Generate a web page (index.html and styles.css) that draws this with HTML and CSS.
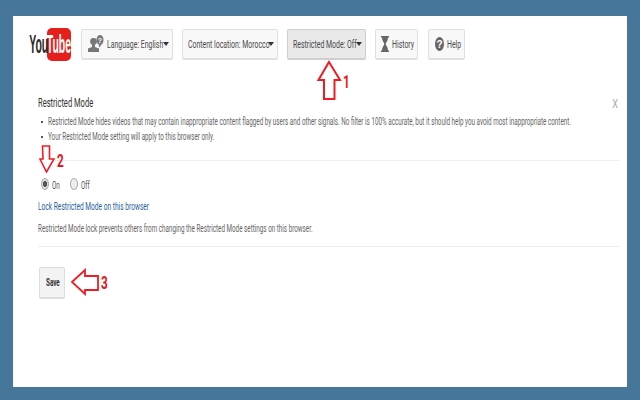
FILE: index.html
```html
<!DOCTYPE html>
<html lang="en">
<head>
<meta charset="utf-8">
<title>Restricted Mode</title>
<link rel="stylesheet" href="styles.css">
</head>
<body>
<main class="panel">
  <header class="topbar">
    <div class="logo"><span class="you"><span class="you-text">You</span></span><span class="tube"><span class="tube-text">Tube</span></span></div>
    <nav class="menu">
      <button class="btn btn-lang">
        <svg class="ic" width="16" height="18" viewBox="0 0 16 18"><circle cx="5.500" cy="6.500" r="3.400" fill="#777"/><path d="M4 9.500h3V12l4 1.500V17H0v-3.500L4 12z" fill="#777"/><ellipse cx="12" cy="5" rx="3.500" ry="5" fill="#777"/><path d="M10.500 9.500h3l-2 3z" fill="#777"/><text x="12" y="8" class="ic-q">?</text></svg>
        <span class="sq label-lang">Language: English</span><i class="caret"></i>
      </button>
      <button class="btn btn-loc"><span class="sq label-loc">Content location: Morocco</span><i class="caret"></i></button>
      <button class="btn btn-mode"><span class="sq label-mode">Restricted Mode: Off</span><i class="caret"></i></button>
      <button class="btn btn-hist">
        <svg class="ic" width="8" height="16" viewBox="0 0 8 16"><path d="M0 0h8v1.500H7C7 5 5 6.500 4.700 8 5 9.500 7 11 7 14.500h1V16H0v-1.500h1C1 11 3 9.500 3.300 8 3 6.500 1 5 1 1.500H0z" fill="#666"/></svg>
        <span class="sq label-hist">History</span>
      </button>
      <button class="btn btn-help">
        <svg class="ic" width="9" height="14" viewBox="0 0 9 14"><ellipse cx="4.500" cy="7" rx="4.500" ry="7" fill="#666"/><text x="4.500" y="10.500" class="ic-help">?</text></svg>
        <span class="sq label-help">Help</span>
      </button>
    </nav>
  </header>

  <section class="content">
    <div class="title-row">
      <h1 class="title sq">Restricted Mode</h1>
      <span class="close">X</span>
    </div>
    <ul class="notes">
      <li><span class="sq">Restricted Mode hides videos that may contain inappropriate content flagged by users and other signals. No filter is 100% accurate, but it should help you avoid most inappropriate content.</span></li>
      <li><span class="sq">Your Restricted Mode setting will apply to this browser only.</span></li>
    </ul>
    <hr class="rule rule-a">
    <div class="radios">
      <span class="radio radio-on"></span><span class="radio-label sq">On</span>
      <span class="radio"></span><span class="radio-label sq">Off</span>
    </div>
    <a class="lock sq">Lock Restricted Mode on this browser</a>
    <p class="desc"><span class="sq">Restricted Mode lock prevents others from changing the Restricted Mode settings on this browser.</span></p>
    <hr class="rule rule-b">
    <button class="save"><span class="sq">Save</span></button>
  </section>

  <svg class="arrow arrow-1" width="26" height="42" viewBox="0 0 26 42"><path d="M12 2 23 20H17.500V39H7V20H1.500z" fill="#fff" stroke="#ee1c25" stroke-width="2"/></svg>
  <span class="num num-1">1</span>
  <svg class="arrow arrow-2" width="16" height="28" viewBox="0 0 16 28"><path d="M3.500 1h7v13H15L7.500 27 1 14h3z" fill="#fff" stroke="#ee1c25" stroke-width="1.600"/></svg>
  <span class="num num-2">2</span>
  <svg class="arrow arrow-3" width="28" height="28" viewBox="0 0 28 28"><path d="M1 14 14 2v6h13v14H14v4z" fill="#fff" stroke="#ee1c25" stroke-width="1.800"/></svg>
  <span class="num num-3">3</span>
</main>
</body>
</html>
```
FILE: styles.css
```css
* { box-sizing: border-box; }
html, body { margin: 0; height: 400px; overflow: hidden; }
body {
  background: #47769b;
  padding: 16px 13px 13px;
  font-family: "Roboto", "Liberation Sans", sans-serif;
  color: #555;
}
.panel {
  position: relative;
  background: #fff;
  height: 371px;
  padding: 12px 7px 0 25px;
  overflow: hidden;
}
.sq {
  display: inline-block;
  white-space: nowrap;
  transform: scaleX(0.63);
  transform-origin: left center;
}
.topbar { display: flex; align-items: center; height: 33px; }
.logo {
  width: 41px;
  margin-left: -8px;
  margin-right: 10px;
  display: flex;
  align-items: center;
  font-family: "Liberation Sans", sans-serif;
  font-weight: 700;
}
.you { width: 17px; display: flex; justify-content: center; color: #2b2b2b; }
.you-text { flex: none; font-size: 25px; line-height: 25px; transform: scaleX(0.42); }
.tube {
  background: #e5201c;
  color: #fff;
  border-radius: 5px;
  height: 33px;
  width: 24px;
  display: flex;
  justify-content: center;
  align-items: center;
  overflow: hidden;
}
.tube-text { flex: none; font-size: 25px; transform: scaleX(0.42); }
.menu { display: flex; gap: 9px; }
.btn {
  height: 31px;
  display: flex;
  align-items: center;
  padding: 0;
  background: #f8f8f8;
  border: 1px solid #e0e0e0;
  border-bottom-width: 2px;
  border-radius: 2px;
  font: inherit;
  font-size: 11px;
  color: #4a4a4a;
}
.btn-lang { width: 92px; padding-left: 6px; }
.btn-loc { width: 96px; padding-left: 5px; }
.btn-mode { width: 79px; padding-left: 5px; background: #e9e9e9; border-color: #cfcfcf; }
.btn-hist { width: 43px; padding-left: 5px; }
.btn-help { width: 37px; padding-left: 6px; margin-left: 1px; }
.label-lang { width: 55px; margin-left: 3px; }
.label-loc { width: 79px; }
.label-mode { width: 62px; }
.label-hist { margin-left: 3px; }
.label-help { margin-left: 3px; }
.caret {
  flex: none;
  width: 0; height: 0;
  border-left: 3px solid transparent;
  border-right: 3px solid transparent;
  border-top: 4px solid #333;
  margin-left: 1px;
}
.ic { flex: none; }
.ic-q { font: 700 7px "Liberation Sans", sans-serif; fill: #fff; text-anchor: middle; }
.ic-help { font: 700 10px "Liberation Sans", sans-serif; fill: #fff; text-anchor: middle; }

.content { font-size: 10px; padding-top: 34px; }
.title-row { display: flex; justify-content: space-between; align-items: center; height: 16px; }
.title { margin: 0; font-size: 12px; font-weight: 400; color: #333; }
.close { font-size: 13px; color: #aaa; margin-right: 1px; transform: scaleX(0.7); }
.notes { margin: 3px 0 0; padding: 0 0 0 10px; list-style: none; }
.notes li { height: 15px; line-height: 15px; position: relative; white-space: nowrap; color: #666; }
.notes li::before {
  content: "";
  position: absolute;
  left: -7px; top: 7px;
  width: 2px; height: 2px;
  background: #555;
}
.rule { margin: 0; border: 0; border-top: 1px solid #eee; }
.rule-a { margin-top: 16px; }
.radios { display: flex; align-items: center; margin-top: 16px; height: 13px; padding-left: 3px; }
.radio {
  flex: none;
  width: 8px; height: 12px;
  border: 1px solid #aaa;
  border-radius: 50%;
  background: #eee;
  margin-right: 3px;
}
.radio-on { background: radial-gradient(ellipse, #555 42%, #ddd 48%); }
.radio-label { padding-top: 4px; color: #555; }
.radio-label:nth-of-type(2) { width: 18px; }
.lock { display: block; margin-top: 10px; height: 13px; line-height: 13px; color: #2a5f9e; font-size: 10.500px; }
.desc { margin: 9px 0 0; height: 13px; line-height: 13px; color: #666; }
.rule-b { margin-top: 11px; }
.save {
  display: block;
  margin: 20px 0 0 1px;
  width: 26px;
  height: 32px;
  padding: 0 0 0 6px;
  text-align: left;
  background: #f3f3f3;
  border: 1px solid #ddd;
  border-bottom-width: 2px;
  border-radius: 2px;
  font: inherit;
  font-size: 10px;
  font-weight: 700;
  color: #333;
}
.arrow { position: absolute; }
.arrow-1 { left: 304px; top: 44px; }
.arrow-2 { left: 26px; top: 129px; }
.arrow-3 { left: 58px; top: 252px; }
.num {
  position: absolute;
  color: #e8141c;
  font-weight: 700;
  font-size: 19px;
  line-height: 18px;
  transform: scaleX(0.62);
  transform-origin: left center;
}
.num-1 { left: 330px; top: 57px; }
.num-2 { left: 44px; top: 136px; }
.num-3 { left: 88px; top: 258px; }
```
